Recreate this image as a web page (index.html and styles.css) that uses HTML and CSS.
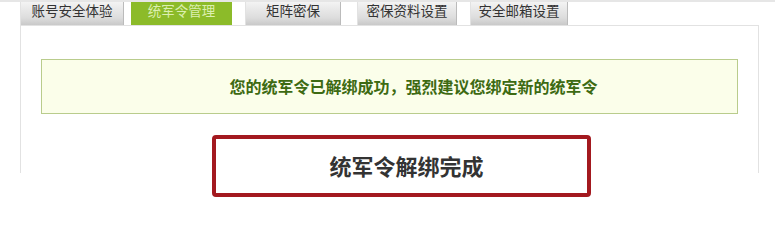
FILE: index.html
```html
<!DOCTYPE html>
<html lang="zh-CN">
<head>
    <meta charset="UTF-8">
    <title>统军令管理</title>
    <link rel="stylesheet" href="styles.css">
</head>
<body>
    <div class="page">
        <div class="tabs">
            <div class="tab t1">账号安全体验</div>
            <div class="tab t2 active">统军令管理</div>
            <div class="tab t3">矩阵密保</div>
            <div class="tab t4">密保资料设置</div>
            <div class="tab t5">安全邮箱设置</div>
        </div>

        <div class="panel">
            <div class="notice">您的统军令已解绑成功，强烈建议您绑定新的统军令</div>
            <div class="done">统军令解绑完成</div>
        </div>
    </div>
</body>
</html>
```

FILE: styles.css
```css
* {
    margin: 0;
    padding: 0;
    box-sizing: border-box;
}

body {
    font-family: "Noto Sans CJK SC", "DejaVu Sans", sans-serif;
    background: #fff;
    width: 775px;
    height: 236px;
    overflow: hidden;
}

.page {
    border-top: 2px solid #e6e6e6;
    padding-left: 20px;
}

/* tabs */
.tabs {
    display: flex;
    height: 23px;
    width: 738px;
}

.tab {
    height: 23px;
    font-size: 13.5px;
    line-height: 17px;
    text-align: center;
    color: #333;
    background: linear-gradient(#f3f3f3, #dcdcdc 70%, #c9c9c9);
    box-shadow: inset 1px 0 0 #e2e2e2, inset -1px 0 0 #bbb;
}

.t1 { width: 104px; }
.t2 { width: 101px; margin-left: 7px; }
.t3 { width: 96px; margin-left: 13px; }
.t4 { width: 100px; margin-left: 16px; }
.t5 { width: 98px; margin-left: 13px; }

.tab.active {
    background: #8cbb29;
    color: #dcefb0;
    box-shadow: none;
}

/* panel */
.panel {
    width: 739px;
    height: 148px;
    border: 1px solid #e2e2e2;
    border-bottom: none;
}

.notice {
    margin: 33px 20px 0 20px;
    height: 55px;
    padding-left: 48px;
    border: 1px solid #b9cc8c;
    background: #fbfeea;
    color: #3d6a12;
    font-size: 16px;
    font-weight: bold;
    line-height: 53px;
    text-align: center;
}

.done {
    margin: 21px 0 0 191px;
    width: 379px;
    height: 62px;
    padding-left: 10px;
    border: 4px solid #a3191f;
    border-radius: 4px;
    background: #fff;
    color: #333;
    font-size: 22px;
    font-weight: bold;
    line-height: 53px;
    text-align: center;
}
```
